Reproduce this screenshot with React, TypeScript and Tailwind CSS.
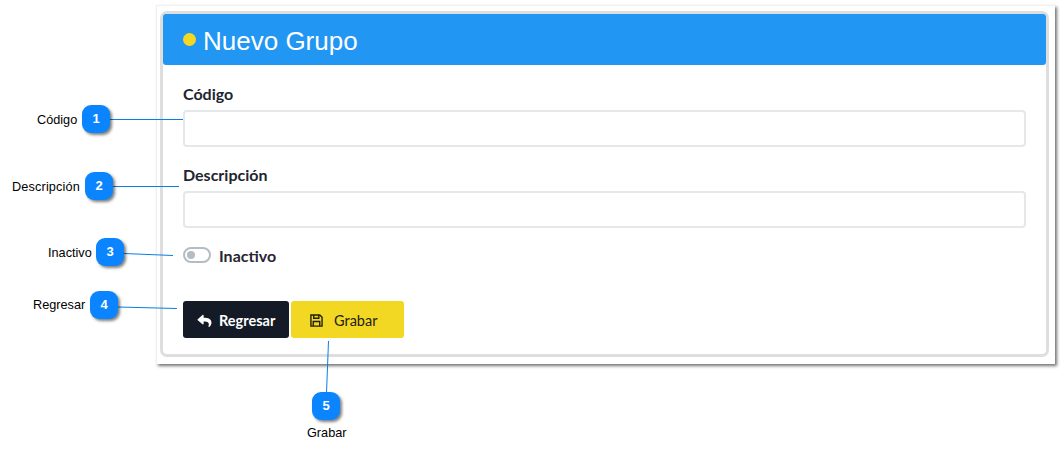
import React from "react";

function Badge({ n, className }: { n: number; className: string }) {
  return (
    <div className={`absolute flex h-[28px] w-[28px] items-center justify-center rounded-[9px] bg-[#0a84ff] text-[13px] font-bold text-white shadow-[2px_2px_3px_rgba(0,0,0,0.5)] [font-family:'Liberation_Sans',sans-serif] ${className}`}>
      {n}
    </div>
  );
}

function Note({ text, className }: { text: string; className: string }) {
  return <div className={`absolute text-[12.7px] leading-[15px] text-black [font-family:'Liberation_Sans',sans-serif] ${className}`}>{text}</div>;
}

function Field({ label }: { label: string }) {
  return (
    <div className="flex flex-col">
      <label className="mb-[5px] h-[22px] text-[16px] font-bold leading-[22px] text-[#1e2530]">{label}</label>
      <div className="h-[37px] rounded-[4px] border-2 border-[#e4e8e8] bg-white" />
    </div>
  );
}

export default function App() {
  return (
    <div className="relative h-[457px] w-[1064px] overflow-hidden bg-white [font-family:Lato,sans-serif]">
      <div className="ml-[156px] w-[899px] pt-[5px]">
        <div className="h-[359px] border-l border-t border-[#f0f0f0] bg-white pb-[7px] pl-[3px] pr-[6px] pt-[5px] shadow-[2px_2px_3px_rgba(0,0,0,0.55)]">
          <div className="h-[346px] rounded-[7px] border-[3px] border-[#dedede] bg-white">
            <div className="flex h-[51px] items-center rounded-[3px] bg-[#2196f3] pl-[20px] pt-[2px]">
              <span className="mr-[7px] h-[13px] w-[13px] -translate-y-[1px] rounded-full bg-[#f2d823]" />
              <span className="text-[26px] leading-[30px] text-white [font-family:'Liberation_Sans',sans-serif]">Nuevo Grupo</span>
            </div>
            <div className="pl-[20px] pr-[20px] pt-[18px]">
              <Field label="Código" />
              <div className="mt-[17px]"><Field label="Descripción" /></div>
              <div className="mt-[17px] flex h-[20px] items-center">
                <div className="flex h-[16px] w-[28px] items-center rounded-full border-2 border-[#b4bcc6] bg-white pl-[2px]">
                  <span className="h-[8px] w-[8px] rounded-full bg-[#b4bcc6]" />
                </div>
                <span className="ml-[8px] translate-y-[1px] text-[16px] font-bold leading-[20px] text-[#2a2433]">Inactivo</span>
              </div>
              <div className="mt-[36px] flex gap-[2px]">
                <button className="flex h-[37px] w-[106px] items-center gap-[7px] rounded-[3px] bg-[#141b26] pl-[14px] pt-[2px] text-[14.5px] font-bold text-white">
                  <svg width="15" height="14" viewBox="0 0 512 512" fill="currentColor"><path d="M8.3 189.8 184.3 37.8C199.7 24.5 224 35.3 224 56v80.1C384.6 137.9 512 170.1 512 322.3c0 61.4-39.6 122.3-83.3 154.1-13.7 9.9-33.1-2.5-28.1-18.6 45.3-144.7-21.5-183.1-176.6-185.4V360c0 20.7-24.3 31.5-39.7 18.2l-176-152c-11.1-9.6-11.1-26.8 0-36.4z" /></svg>
                  Regresar
                </button>
                <button className="flex h-[37px] w-[113px] items-center gap-[11px] rounded-[3px] bg-[#f2d823] pl-[19px] pt-[2px] text-[14.5px] text-[#1f2018]">
                  <svg width="13" height="13" viewBox="0 0 14 14" fill="none" stroke="#1f2010" strokeWidth="1.5"><path d="M1 1h9.5L13 3.5V13H1z" /><path d="M4 1v3.5h5.5V1M3.5 13V8h7v5" /></svg>
                  Grabar
                </button>
              </div>
            </div>
          </div>
        </div>
      </div>

      <svg className="absolute left-0 top-0" width="1064" height="457" fill="none" stroke="#0a7de8" strokeWidth="1">
        <path d="M110 119.5H183" />
        <path d="M113 186.5H179" />
        <path d="M124 253.5L173 255.5" />
        <path d="M118 307L177 308.5" />
        <path d="M328.5 341L326.5 393" />
      </svg>

      <Note text="Código" className="left-[37px] top-[113px]" />
      <Badge n={1} className="left-[82px] top-[105px]" />
      <Note text="Descripción" className="left-[12px] top-[180px] tracking-[0.15px]" />
      <Badge n={2} className="left-[85px] top-[172px]" />
      <Note text="Inactivo" className="left-[48px] top-[246px]" />
      <Badge n={3} className="left-[96px] top-[238px]" />
      <Note text="Regresar" className="left-[33px] top-[298px]" />
      <Badge n={4} className="left-[90px] top-[291px]" />
      <Badge n={5} className="left-[312px] top-[392px]" />
      <Note text="Grabar" className="left-[307px] top-[426px]" />
    </div>
  );
}
